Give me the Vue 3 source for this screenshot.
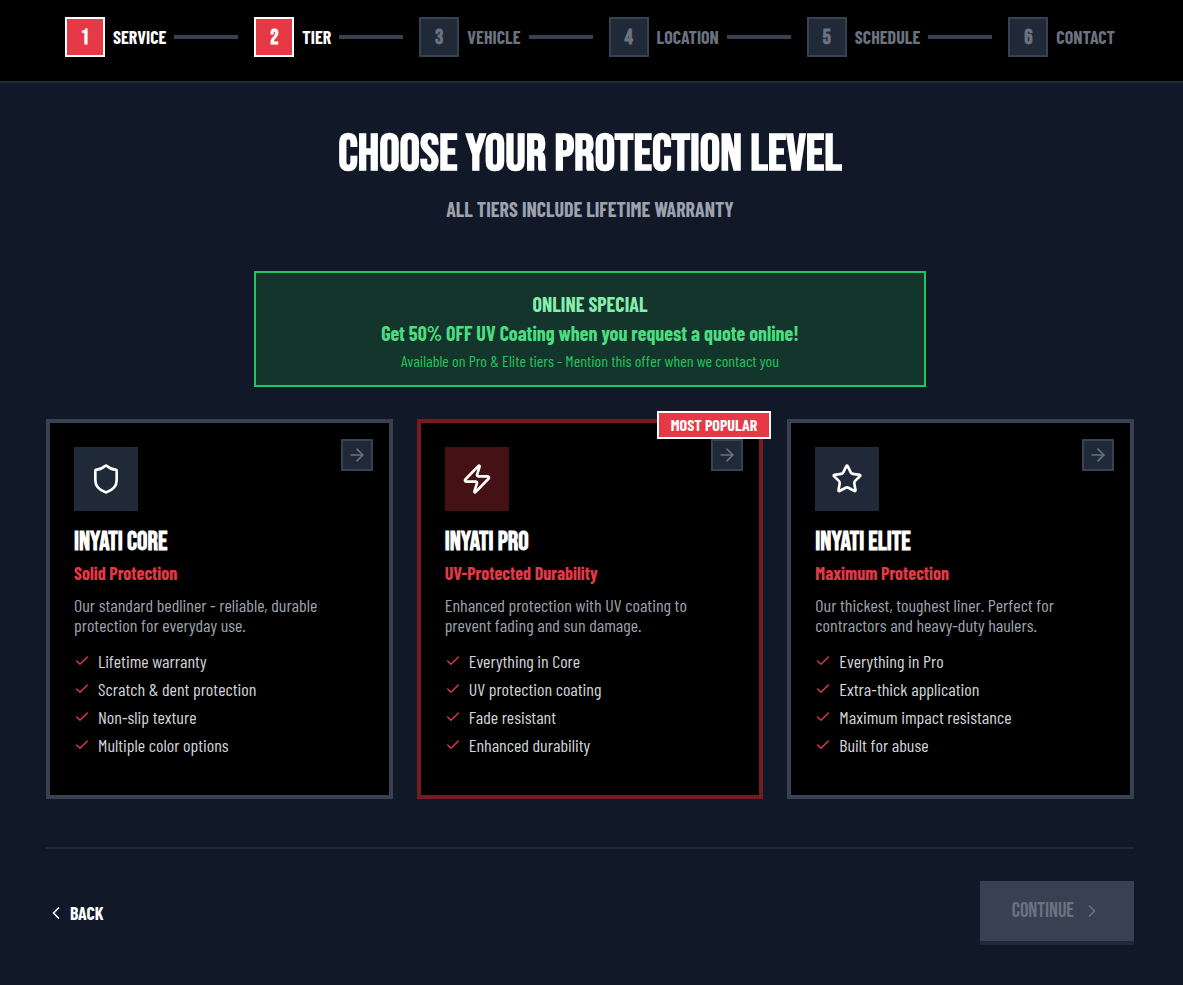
<template>
  <div class="page">
    <header class="steps-bar">
      <ol class="steps">
        <li v-for="(step, i) in steps" :key="step" class="step" :class="{ active: i < current }">
          <span class="step-num">{{ i + 1 }}</span>
          <span class="step-label">{{ step }}</span>
          <span v-if="i < steps.length - 1" class="step-line"></span>
        </li>
      </ol>
    </header>

    <main class="content">
      <h1 class="title">Choose Your Protection Level</h1>
      <p class="subtitle">All tiers include lifetime warranty</p>

      <!-- promo banner -->
      <section class="promo">
        <p class="promo-tag">Online Special</p>
        <p class="promo-main">Get 50% OFF UV Coating when you request a quote online!</p>
        <p class="promo-note">Available on Pro &amp; Elite tiers - Mention this offer when we contact you</p>
      </section>

      <div class="tiers">
        <article v-for="tier in tiers" :key="tier.name" class="tier" :class="{ popular: tier.popular }">
          <span v-if="tier.popular" class="badge">Most Popular</span>
          <button class="tier-go" type="button" :aria-label="'Select ' + tier.name" @click="selected = tier.name">
            <svg viewBox="0 0 24 24" width="20" height="20"><path d="M5 12h14" /><path d="m12 5 7 7-7 7" /></svg>
          </button>
          <div class="tier-icon">
            <svg viewBox="0 0 24 24" width="32" height="32"><path :d="tier.icon" /></svg>
          </div>
          <h2 class="tier-name">{{ tier.name }}</h2>
          <p class="tier-tagline">{{ tier.tagline }}</p>
          <p class="tier-desc">{{ tier.desc }}</p>
          <ul class="features">
            <li v-for="f in tier.features" :key="f">
              <svg viewBox="0 0 24 24" width="16" height="16"><path d="M20 6 9 17l-5-5" /></svg>
              <span>{{ f }}</span>
            </li>
          </ul>
        </article>
      </div>

      <footer class="nav">
        <button class="back" type="button">
          <svg viewBox="0 0 24 24" width="20" height="20"><path d="m15 18-6-6 6-6" /></svg>
          <span>Back</span>
        </button>
        <button class="continue" type="button" :disabled="!selected">
          <span>Continue</span>
          <svg viewBox="0 0 24 24" width="20" height="20"><path d="m9 18 6-6-6-6" /></svg>
        </button>
      </footer>
    </main>
  </div>
</template>

<script setup>
import { ref } from 'vue'

const steps = ['Service', 'Tier', 'Vehicle', 'Location', 'Schedule', 'Contact']
const current = 2
const selected = ref('')

const tiers = [
  {
    name: 'Inyati Core',
    tagline: 'Solid Protection',
    desc: 'Our standard bedliner - reliable, durable protection for everyday use.',
    features: ['Lifetime warranty', 'Scratch & dent protection', 'Non-slip texture', 'Multiple color options'],
    icon: 'M20 13c0 5-3.5 7.5-7.66 8.95a1 1 0 0 1-.67-.01C7.5 20.5 4 18 4 13V6a1 1 0 0 1 1-1c2 0 4.5-1.2 6.24-2.72a1.17 1.17 0 0 1 1.52 0C14.51 3.81 17 5 19 5a1 1 0 0 1 1 1z'
  },
  {
    name: 'Inyati Pro',
    tagline: 'UV-Protected Durability',
    desc: 'Enhanced protection with UV coating to prevent fading and sun damage.',
    features: ['Everything in Core', 'UV protection coating', 'Fade resistant', 'Enhanced durability'],
    icon: 'M4 14a1 1 0 0 1-.78-1.63l9.9-10.2a.5.5 0 0 1 .86.46l-1.92 6.02A1 1 0 0 0 13 10h7a1 1 0 0 1 .78 1.63l-9.9 10.2a.5.5 0 0 1-.86-.46l1.92-6.02A1 1 0 0 0 11 14z',
    popular: true
  },
  {
    name: 'Inyati Elite',
    tagline: 'Maximum Protection',
    desc: 'Our thickest, toughest liner. Perfect for contractors and heavy-duty haulers.',
    features: ['Everything in Pro', 'Extra-thick application', 'Maximum impact resistance', 'Built for abuse'],
    icon: 'M11.525 2.295a.53.53 0 0 1 .95 0l2.31 4.679a2.123 2.123 0 0 0 1.595 1.16l5.166.756a.53.53 0 0 1 .294.904l-3.736 3.638a2.123 2.123 0 0 0-.611 1.878l.882 5.14a.53.53 0 0 1-.771.56l-4.618-2.428a2.122 2.122 0 0 0-1.973 0L6.396 21.01a.53.53 0 0 1-.77-.56l.881-5.139a2.122 2.122 0 0 0-.611-1.879L2.16 9.795a.53.53 0 0 1 .294-.906l5.165-.755a2.122 2.122 0 0 0 1.597-1.16z'
  }
]
</script>

<style>
body {
  background: #111827;
}
</style>

<style scoped>
.page {
  min-height: 100vh;
  background: #111827;
  color: #fff;
  font-family: 'Barlow Condensed', 'Roboto Condensed', 'Liberation Sans', sans-serif;
}
h1, h2, p, ol, ul { margin: 0; padding: 0; }
ol, ul { list-style: none; }
button { font-family: inherit; cursor: pointer; }
svg {
  display: block;
  flex-shrink: 0;
  fill: none;
  stroke: currentColor;
  stroke-width: 2;
  stroke-linecap: round;
  stroke-linejoin: round;
}

/* progress */
.steps-bar {
  padding: 17px 68px 24px 65px;
  background: #000;
  border-bottom: 2px solid #1f2937;
}
.steps { display: flex; justify-content: space-between; }
.step {
  display: flex;
  align-items: center;
  gap: 8px;
  color: #6b7280;
}
.step-num {
  display: flex;
  align-items: center;
  justify-content: center;
  box-sizing: border-box;
  width: 40px;
  height: 40px;
  border: 2px solid #374151;
  background: #1f2937;
  font-family: 'Bebas Neue', 'Barlow Condensed', sans-serif;
  font-size: 21px;
  font-weight: 700;
}
.step-label {
  font-size: 18px;
  line-height: 20px;
  font-weight: 700;
  text-transform: uppercase;
}
.step-line { width: 64px; height: 4px; background: #374151; }
.step.active { color: #fff; }
.step.active .step-num { background: #e63946; border-color: #fff; }

.content { padding: 48px 49px 40px 46px; }
.title {
  font-family: 'Bebas Neue', 'Barlow Condensed', sans-serif;
  font-size: 51px;
  line-height: 48px;
  font-weight: 700;
  text-align: center;
  text-transform: uppercase;
}
.subtitle {
  margin-top: 16px;
  color: #9ca3af;
  font-size: 20px;
  line-height: 28px;
  font-weight: 700;
  text-align: center;
  text-transform: uppercase;
}

.promo {
  box-sizing: border-box;
  max-width: 672px;
  margin: 48px auto 32px;
  padding: 16px 16px 14px;
  border: 2px solid #22c55e;
  background: #14352b;
  text-align: center;
}
.promo-tag {
  color: #86efac;
  font-size: 20px;
  line-height: 30px;
  font-weight: 700;
  text-transform: uppercase;
}
.promo-main {
  color: #4ade80;
  font-size: 20px;
  line-height: 28px;
  font-weight: 700;
}
.promo-note {
  margin-top: 4px;
  color: #22c55e;
  font-size: 16px;
  line-height: 20px;
}

/* tier cards */
.tiers {
  display: grid;
  grid-template-columns: repeat(3, 1fr);
  gap: 24px;
}
.tier {
  position: relative;
  padding: 24px 24px 40px;
  border: 4px solid #374151;
  background: #000;
}
.tier.popular { border-color: #731d23; }
.badge {
  position: absolute;
  z-index: 1;
  top: -12px;
  right: -12px;
  padding: 2px 12px;
  border: 2px solid #fff;
  background: #e63946;
  font-size: 16px;
  line-height: 20px;
  font-weight: 700;
  text-transform: uppercase;
}
.tier-go {
  position: absolute;
  top: 16px;
  right: 16px;
  display: flex;
  align-items: center;
  justify-content: center;
  width: 32px;
  height: 32px;
  padding: 0;
  border: 2px solid #374151;
  background: #1f2937;
  color: #6b7280;
}
.tier-icon {
  display: flex;
  align-items: center;
  justify-content: center;
  width: 64px;
  height: 64px;
  margin-bottom: 16px;
  background: #1f2937;
}
.popular .tier-icon { background: #451115; }
.tier-name {
  font-family: 'Bebas Neue', 'Barlow Condensed', sans-serif;
  font-size: 26px;
  line-height: 32px;
  font-weight: 700;
  text-transform: uppercase;
}
.tier-tagline {
  color: #e63946;
  font-size: 18px;
  line-height: 28px;
  font-weight: 700;
}
.tier-desc {
  margin: 8px 0 16px;
  color: #9ca3af;
  font-size: 18px;
  line-height: 20px;
}
.features {
  display: flex;
  flex-direction: column;
  gap: 8px;
  color: #d1d5db;
  font-size: 18px;
  line-height: 20px;
}
.features li { display: flex; gap: 8px; }
.features svg { margin-top: 2px; color: #e63946; }

.nav {
  display: flex;
  justify-content: space-between;
  align-items: center;
  margin-top: 48px;
  padding-top: 32px;
  border-top: 2px solid #1f2937;
}
.back {
  display: flex;
  align-items: center;
  gap: 4px;
  padding: 0;
  border: 0;
  background: none;
  color: #fff;
  font-size: 18px;
  line-height: 28px;
  font-weight: 700;
  text-transform: uppercase;
}
.continue {
  display: flex;
  align-items: center;
  gap: 8px;
  padding: 16px 32px;
  border: 0;
  border-bottom: 4px solid #1f2937;
  background: #374151;
  color: #6b7280;
  font-family: 'Bebas Neue', 'Barlow Condensed', sans-serif;
  font-size: 21px;
  line-height: 28px;
  text-transform: uppercase;
}
.continue:disabled { cursor: not-allowed; }
</style>
